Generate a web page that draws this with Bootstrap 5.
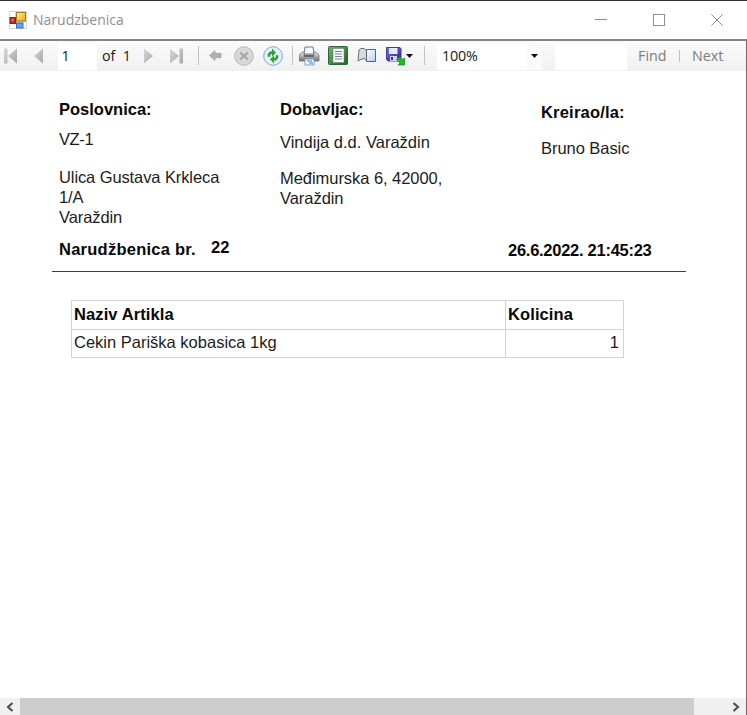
<!DOCTYPE html>
<html lang="hr">
<head>
<meta charset="utf-8">
<meta name="viewport" content="width=device-width, initial-scale=1">
<title>Narudzbenica</title>
<link href="https://cdn.jsdelivr.net/npm/bootstrap@5.3.0/dist/css/bootstrap.min.css" rel="stylesheet">
<style>
html, body { height: 100%; overflow: hidden; }
body { font-family: "Liberation Sans", Arial, sans-serif; font-size: 16.5px; line-height: 20px; color: #1c1c1c; background: #fff; }
svg { display: block; flex: none; }
.app-window { height: 715px; border-top: 1px solid #333; }
.title-bar { height: 38px; padding-left: 9px; font-family: "Open Sans", "Noto Sans", sans-serif; font-size: 14px; color: #8f8f8f; }
.title-name { margin-left: 6px; }
.window-buttons { gap: 46px; margin-right: 24px; }
.viewer { border-top: 2px solid #858585; border-right: 1px solid #6b6b6b; min-height: 0; }
.tool-strip { display: grid; height: 30px; padding: 0 0 1px 4px; align-items: center;
  grid-template-columns: 30px 24px 44px 42px 26px 28px 11px 25px 29px 29px 7px 29px 29px 29px 38px 13px 118px 83px 41px 13px 1fr;
  background: linear-gradient(#fbfbfb, #f0f0f0); font-family: "Open Sans", "Noto Sans", sans-serif; font-size: 14.3px; color: #1a1a1a; white-space: nowrap; }
.page-box { width: 39px; height: 28px; padding: 4px 4px 4px 3.5px; background: #fff; }
.zoom-box { width: 105px; height: 28px; background: #fff; padding-left: 5px; letter-spacing: -.2px; }
.zoom-drop { width: 15px; height: 28px; background: #fafafa; }
.find-box { width: 72px; height: 28px; background: #fff; }
.divider { width: 1px; height: 19px; background: #c3c3c3; }
.divider-sm { width: 1px; height: 12px; background: #bdbdbd; }
.find-link { color: #7c7c7c; }
.report { padding-left: 52px; min-height: 0; }
.report-head { display: grid; grid-template-columns: 221px 260px 1fr; height: 165px; padding: 28px 0 0 7px; }
.report-head p { margin: 0; }
.gap-a { padding-top: 10px; letter-spacing: -.4px; }
.gap-b { padding-top: 18px; letter-spacing: -.1px; }
.gap-c { padding-top: 13px; }
.gap-d { padding-top: 16px; letter-spacing: -.05px; }
.creator { padding-top: 3px; padding-left: 1px; }
.creator .fw-bold { letter-spacing: .2px; }
.order-line { display: grid; grid-template-columns: 152px 297px 1fr; width: 634px; height: 36px; padding: 3px 0 0 7px; border-bottom: 1px solid #3f3f3f; }
.order-label { letter-spacing: .25px; }
.order-no { margin-top: -2px; }
.order-date { margin-top: 1px; letter-spacing: -.27px; }
.fw-bold { color: #080808; }
.items { width: 553px; margin: 28px 0 0 19px; border-collapse: collapse; }
.items th, .items td { border: 1px solid #d3d3d3; padding: 3px 4px 5px 2px; line-height: 20px; }
.items th { height: 29px; color: #080808; letter-spacing: .1px; }
.items td { height: 28px; padding-top: 2px; }
.items .name-col { width: 434px; }
.h-scroll { height: 17px; background: #f0f0f0; }
.h-arrow { width: 20px; height: 17px; }
.h-thumb { width: 674px; height: 17px; background: #cdcdcd; }
</style>
<script src="https://cdn.jsdelivr.net/npm/bootstrap@5.3.0/dist/js/bootstrap.bundle.min.js"></script>
</head>
<body>
<svg width="0" height="0" class="position-absolute" aria-hidden="true">
  <defs>
    <linearGradient id="gold" x2="1" y2="1"><stop stop-color="#fff0a0"/><stop offset="1" stop-color="#eda900"/></linearGradient>
    <linearGradient id="steel" x2="0" y2="1"><stop stop-color="#ececec"/><stop offset="1" stop-color="#686c70"/></linearGradient>
    <linearGradient id="gray" x2="1" y2="1"><stop stop-color="#d8d8d8"/><stop offset="1" stop-color="#a6a6a6"/></linearGradient>
    <linearGradient id="green" x2="1" y2="1"><stop stop-color="#79b179"/><stop offset="1" stop-color="#16631f"/></linearGradient>
    <linearGradient id="blue" x2="1" y2="1"><stop stop-color="#7774da"/><stop offset="1" stop-color="#27248f"/></linearGradient>
    <linearGradient id="sheet" x2="1" y2="1"><stop stop-color="#fff"/><stop offset="1" stop-color="#b5cdec"/></linearGradient>
  </defs>
</svg>
<div class="app-window d-flex flex-column">
  <header class="title-bar d-flex align-items-center">
    <svg width="18" height="18" viewBox="0 0 18 18"><rect width="18" height="18" fill="#d5d5d5"/><path d="M1 1h5v5H1zM1 13h6v4H1zM14 11h3v6h-3z" fill="#fff"/><rect x="1" y="6.5" width="5.5" height="6" fill="#bd3028" stroke="#83251e"/><rect x="2.5" y="8" width="2" height="2" fill="#e77a6b"/><rect x="7.5" y="1.5" width="9" height="8.5" fill="url(#gold)" stroke="#a47c18"/><rect x="7.500" y="12" width="6.500" height="5" fill="#64a1f3" stroke="#3f6db5"/></svg>
    <span class="title-name">Narudzbenica</span>
    <div class="window-buttons d-flex align-items-center ms-auto" aria-hidden="true">
      <svg width="12" height="12"><path d="M0 5.5h12" stroke="#8e8e8e"/></svg>
      <svg width="12" height="12"><rect x=".5" y=".5" width="11" height="11" fill="none" stroke="#8e8e8e"/></svg>
      <svg width="12" height="12"><path d="M.3.3l11.4 11.4M11.7.3L.3 11.7" stroke="#8e8e8e"/></svg>
    </div>
  </header>
  <main class="viewer d-flex flex-column flex-grow-1">
    <div class="tool-strip" role="toolbar">
      <svg width="13" height="16"><path d="M0 .5h3.500v15H0zM13 .5v15L4 8z" fill="url(#gray)"/></svg>
      <svg width="9" height="16"><path d="M9 .5v15L0 8z" fill="url(#gray)"/></svg>
      <div class="page-box">1</div>
      <span>of&nbsp; 1</span>
      <svg width="9" height="16"><path d="M0 .5v15L9 8z" fill="url(#gray)"/></svg>
      <svg width="13" height="16"><path d="M9.500.5H13v15H9.500zM0 .5v15L9 8z" fill="url(#gray)"/></svg>
      <div class="divider"></div>
      <svg width="13" height="13"><path d="M.5 6.500L6 1.500v2.800h6v4.400H6v2.800z" fill="#b0b0b0" stroke="#999" stroke-width=".6"/></svg>
      <svg width="20" height="20"><circle cx="10" cy="10" r="9.3" fill="#d8d8d8" stroke="#b8b8b8"/><path d="M6 6.500l8 7M14 6.500l-8 7" stroke="#a6a6a6" stroke-width="2.200"/></svg>
      <svg width="20" height="20"><circle cx="10" cy="10" r="9.3" fill="#e5f0fc" stroke="#7da6d9"/><path d="M4.500 10.500C4.500 7 6.500 5.200 9 5.200V2.500l4 4.200-4 3.800V8C7.500 8 7 9 7 11zM15.500 9.500c0 3.500-2 5.300-4.500 5.300v2.700l-4-4.200 4-3.800V12c1.500 0 2-1 2-3z" fill="#2ba52b"/></svg>
      <div class="divider"></div>
      <svg width="21" height="20"><path d="M6 1h8l1 7H5z" fill="#f4f9ff" stroke="#617d9d"/><path d="M3 6h2v3h10V6h2l3 3v6H0V9z" fill="url(#steel)" stroke="#777" stroke-width=".8"/><path d="M5 10h10" stroke="#555" stroke-width="1.500"/><path d="M6 13h9v6H6z" fill="#f6fbff" stroke="#7d9dbc"/><path d="M8 15h5M10 17h4" stroke="#5eb5ee" stroke-width="1.500"/></svg>
      <svg width="20" height="20"><rect x=".5" y=".5" width="19" height="18" rx="1" fill="url(#green)" stroke="#266c32"/><rect x="5" y="2.500" width="11" height="14" fill="#fff" stroke="#698a73" stroke-width=".6"/><path d="M7 5.500h7M7 8h7M7 10.500h7M7 13h7" stroke="#6c83a2"/></svg>
      <svg width="20" height="18"><path d="M1 14L2 3l2-1.500h3l2.500 2v10L7 11.500 5 12z" fill="#d6d9de" stroke="#697382"/><path d="M9.500 2.500h9v12h-9z" fill="url(#sheet)" stroke="#56657b"/></svg>
      <svg width="28" height="20" viewBox="0 0 28 20"><path d="M.5 1.500h13.500l1 1V15H2L.5 13.500z" fill="url(#blue)" stroke="#423ba4"/><path d="M3 2h8.500v6H3z" fill="#e3eafd"/><path d="M4 10h7v5H4z" fill="#d5d7e5"/><path d="M5 11h2v3H5z" fill="#332e87"/><path d="M10.500 13.500l3-2.500 2.500 2.500 2.500-1.500v7H12l2-2z" fill="#25b52b" stroke="#168c20" stroke-width=".7"/><path d="M20 8h7l-3.500 4z" fill="#111"/></svg>
      <div class="divider"></div>
      <div class="zoom-box d-flex align-items-center"><span>100%</span><div class="zoom-drop d-flex align-items-center justify-content-center ms-auto"><svg width="7" height="4"><path d="M0 0h7L3.500 4z" fill="#111"/></svg></div></div>
      <div class="find-box"></div>
      <span class="find-link">Find</span>
      <div class="divider-sm"></div>
      <span class="find-link">Next</span>
    </div>
    <section class="report flex-grow-1">
      <div class="report-head">
        <div><p class="fw-bold">Poslovnica:</p><p class="gap-a">VZ-1</p><p class="gap-b">Ulica Gustava Krkleca<br>1/A<br>Varaždin</p></div>
        <div><p class="fw-bold">Dobavljac:</p><p class="gap-c">Vindija d.d. Varaždin</p><p class="gap-d">Međimurska 6, 42000,<br>Varaždin</p></div>
        <div class="creator"><p class="fw-bold">Kreirao/la:</p><p class="gap-d">Bruno Basic</p></div>
      </div>
      <div class="order-line fw-bold"><span class="order-label">Narudžbenica br.</span><span class="order-no">22</span><span class="order-date">26.6.2022. 21:45:23</span></div>
      <table class="items">
        <thead><tr><th class="name-col">Naziv Artikla</th><th>Kolicina</th></tr></thead>
        <tbody><tr><td>Cekin Pariška kobasica 1kg</td><td class="text-end">1</td></tr></tbody>
      </table>
    </section>
    <div class="h-scroll d-flex align-items-center">
      <div class="h-arrow d-flex align-items-center justify-content-center"><svg width="8" height="10"><path d="M6.500 1L2 5l4.500 4" fill="none" stroke="#505050" stroke-width="2.200"/></svg></div>
      <div class="h-thumb"></div>
      <div class="h-arrow d-flex align-items-center justify-content-center ms-auto"><svg width="8" height="10"><path d="M1.500 1L6 5 1.500 9" fill="none" stroke="#505050" stroke-width="2.200"/></svg></div>
    </div>
  </main>
</div>
</body>
</html>
